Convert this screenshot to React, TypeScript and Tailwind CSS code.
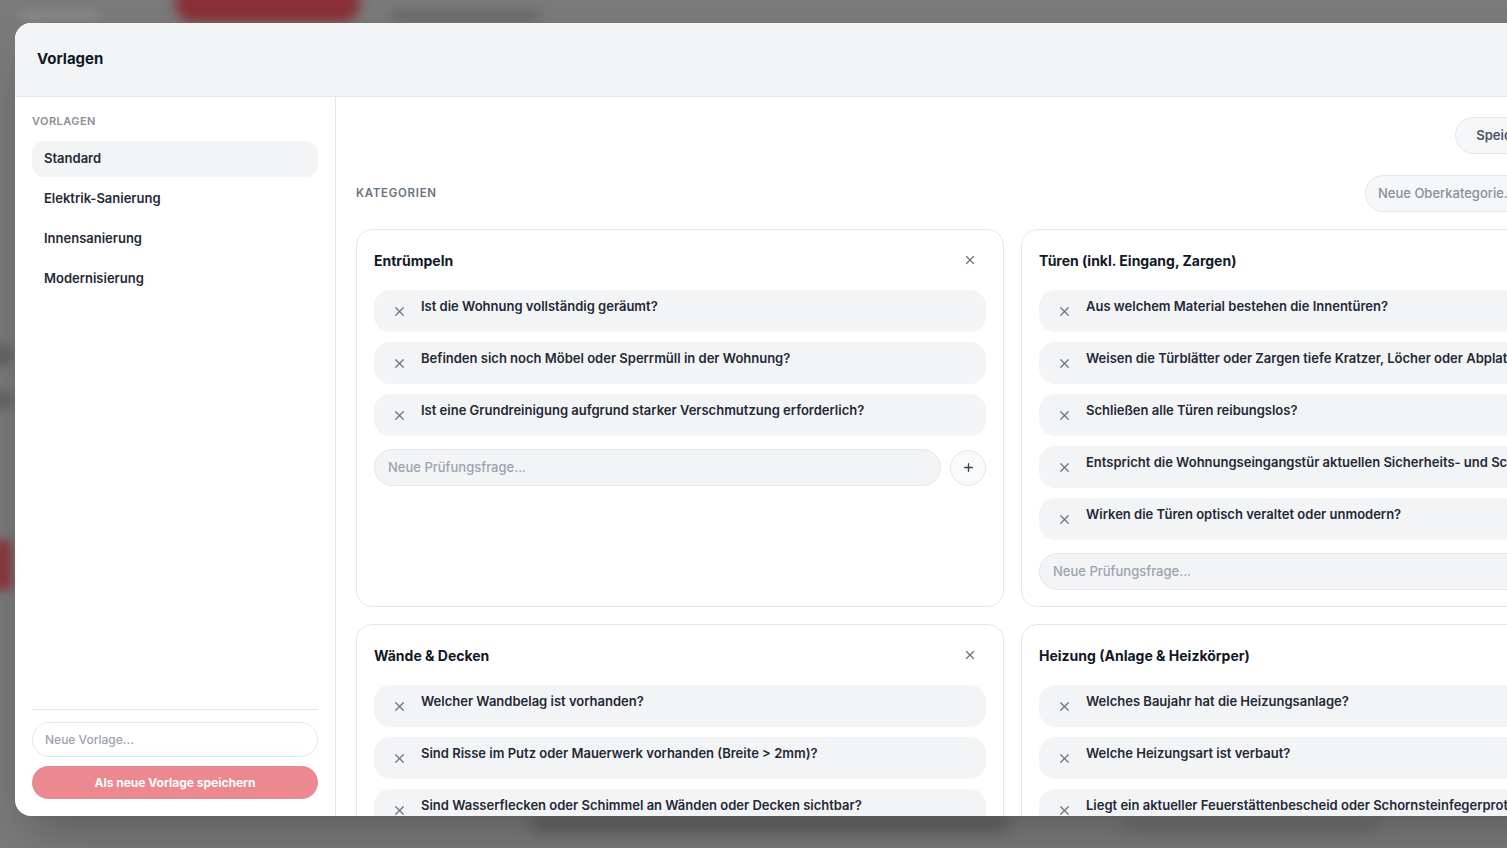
import { Plus, X } from 'lucide-react'

type Category = { title: string; questions: string[] }

const templates = ['Standard', 'Elektrik-Sanierung', 'Innensanierung', 'Modernisierung']

const categories: Category[] = [
  {
    title: 'Entrümpeln',
    questions: [
      'Ist die Wohnung vollständig geräumt?',
      'Befinden sich noch Möbel oder Sperrmüll in der Wohnung?',
      'Ist eine Grundreinigung aufgrund starker Verschmutzung erforderlich?',
    ],
  },
  {
    title: 'Türen (inkl. Eingang, Zargen)',
    questions: [
      'Aus welchem Material bestehen die Innentüren?',
      'Weisen die Türblätter oder Zargen tiefe Kratzer, Löcher oder Abplatzungen auf?',
      'Schließen alle Türen reibungslos?',
      'Entspricht die Wohnungseingangstür aktuellen Sicherheits- und Schallschutzanforderungen?',
      'Wirken die Türen optisch veraltet oder unmodern?',
    ],
  },
  {
    title: 'Wände & Decken',
    questions: [
      'Welcher Wandbelag ist vorhanden?',
      'Sind Risse im Putz oder Mauerwerk vorhanden (Breite > 2mm)?',
      'Sind Wasserflecken oder Schimmel an Wänden oder Decken sichtbar?',
      'Müssen Wände gespachtelt oder neu verputzt werden?',
    ],
  },
  {
    title: 'Heizung (Anlage & Heizkörper)',
    questions: [
      'Welches Baujahr hat die Heizungsanlage?',
      'Welche Heizungsart ist verbaut?',
      'Liegt ein aktueller Feuerstättenbescheid oder Schornsteinfegerprotokoll vor?',
      'Sind alle Heizkörper funktionsfähig und dicht?',
    ],
  },
]

function CategoryCard({ category }: { category: Category }) {
  return (
    <div className="flex flex-col rounded-2xl border border-[#e4e6ea] bg-white px-[17px] pb-[16px] pt-[20px]">
      <div className="flex h-5 items-center justify-between">
        <h3 className="text-[14px] font-bold text-[#111827]">{category.title}</h3>
        <button className="flex h-5 w-8 items-center justify-center text-[#6b7280]">
          <X size={14} strokeWidth={2.2} />
        </button>
      </div>
      <div className="mt-5 flex flex-col gap-[10px]">
        {category.questions.map((q) => (
          <div key={q} className="flex h-[42px] items-center gap-[14px] rounded-2xl bg-[#f3f4f6] pl-[18px] pr-4">
            <X size={15} strokeWidth={2} className="shrink-0 text-[#6b7280]" />
            <span className="-translate-y-[4px] truncate text-[13px] font-semibold text-[#1f2937]">{q}</span>
          </div>
        ))}
      </div>
      <div className="mt-[13px] flex items-center gap-[9px]">
        <div className="flex h-[37px] flex-1 items-center rounded-full border border-[#e4e6ea] bg-[#f3f4f6] px-[13px] text-[13px] font-medium text-[#9ca3af]">
          Neue Prüfungsfrage...
        </div>
        <button className="flex h-9 w-9 shrink-0 items-center justify-center rounded-full border border-[#e4e6ea] bg-[#f9fafb] text-[#374151]">
          <Plus size={13} strokeWidth={2.5} />
        </button>
      </div>
    </div>
  )
}

export default function App() {
  return (
    <div className="relative h-[848px] w-[1507px] overflow-hidden bg-[#7a7a7a] pl-[15px] pt-[23px] font-['Inter','Liberation_Sans',sans-serif]">
      {/* blurred page behind the overlay */}
      <div className="pointer-events-none absolute inset-0">
        <div className="absolute left-[175px] top-[-14px] h-[36px] w-[185px] rounded-full bg-[#8a2f35] blur-[6px]" />
        <div className="absolute left-[390px] top-[10px] h-[12px] w-[150px] rounded-full bg-[#6a6a6a] blur-[5px]" />
        <div className="absolute left-[20px] top-[10px] h-[10px] w-[80px] rounded-full bg-[#8a8a8a] blur-[5px]" />
        <div className="absolute left-[-10px] top-[540px] h-[50px] w-[22px] rounded bg-[#8b3a3f] blur-[5px]" />
        <div className="absolute left-[-10px] top-[345px] h-[20px] w-[22px] rounded bg-[#636363] blur-[5px]" />
        <div className="absolute left-[-10px] top-[390px] h-[20px] w-[22px] rounded bg-[#666666] blur-[5px]" />
        <div className="absolute left-[530px] top-[815px] h-[16px] w-[480px] rounded-full bg-[#5f5f5f] blur-[8px]" />
        <div className="absolute left-[1120px] top-[818px] h-[12px] w-[260px] rounded-full bg-[#6a6a6a] blur-[8px]" />
      </div>

      <div className="relative flex h-[793px] w-[1674px] flex-col overflow-hidden rounded-2xl bg-white shadow-2xl">
        <header className="flex h-[74px] shrink-0 items-center border-b border-[#e4e6ea] bg-[#f3f4f6] px-[22px]">
          <h2 className="text-[15px] font-bold text-[#111827]">Vorlagen</h2>
        </header>

        <div className="flex min-h-0 flex-1">
          <aside className="flex w-[321px] shrink-0 flex-col border-r border-[#e4e6ea] px-[17px] pb-[17px] pt-4">
            <p className="text-[11px] font-semibold uppercase leading-4 tracking-[0.04em] text-[#8b8f97]">Vorlagen</p>
            <nav className="mt-3 flex flex-col gap-1">
              {templates.map((t, i) => (
                <div
                  key={t}
                  className={`flex h-9 items-center rounded-xl px-3 text-[13px] font-semibold text-[#1f2937] ${i === 0 ? 'bg-[#f3f4f6]' : ''}`}
                >
                  {t}
                </div>
              ))}
            </nav>
            <div className="mt-auto border-t border-[#e4e6ea] pt-3">
              <div className="flex h-[35px] items-center rounded-full border border-[#e4e6ea] px-3 text-[12px] font-medium text-[#9ca3af]">
                Neue Vorlage...
              </div>
              <button className="mt-[9px] flex h-[33px] w-full items-center justify-center rounded-full bg-[#ec8890] text-[12px] font-bold text-white">
                Als neue Vorlage speichern
              </button>
            </div>
          </aside>

          <main className="min-w-0 flex-1 overflow-hidden px-5 pt-5">
            <div className="flex justify-end gap-2">
              <button className="h-[37px] rounded-full border border-[#e4e6ea] bg-[#f6f7f8] px-5 text-[13px] font-semibold text-[#4b5563]">
                Speichern
              </button>
              <button className="h-[37px] rounded-full border border-[#e4e6ea] bg-[#f6f7f8] px-[22px] text-[13px] font-semibold text-[#4b5563]">
                Löschen
              </button>
            </div>
            <div className="mt-[21px] flex h-[37px] items-center justify-between">
              <p className="text-[11.5px] font-semibold uppercase tracking-[0.06em] text-[#6b7280]">Kategorien</p>
              <div className="flex items-center gap-2">
                <div className="flex h-[37px] w-[260px] items-center rounded-full border border-[#e4e6ea] bg-[#f6f7f8] px-[12px] text-[13px] font-medium text-[#8b8f97]">
                  Neue Oberkategorie...
                </div>
                <button className="flex h-9 w-9 items-center justify-center rounded-full border border-[#e4e6ea] bg-[#f9fafb] text-[#374151]">
                  <Plus size={13} strokeWidth={2.5} />
                </button>
              </div>
            </div>
            <div className="mt-[17px] grid grid-cols-2 gap-[17px]">
              {categories.map((c) => (
                <CategoryCard key={c.title} category={c} />
              ))}
            </div>
          </main>
        </div>
      </div>
    </div>
  )
}
